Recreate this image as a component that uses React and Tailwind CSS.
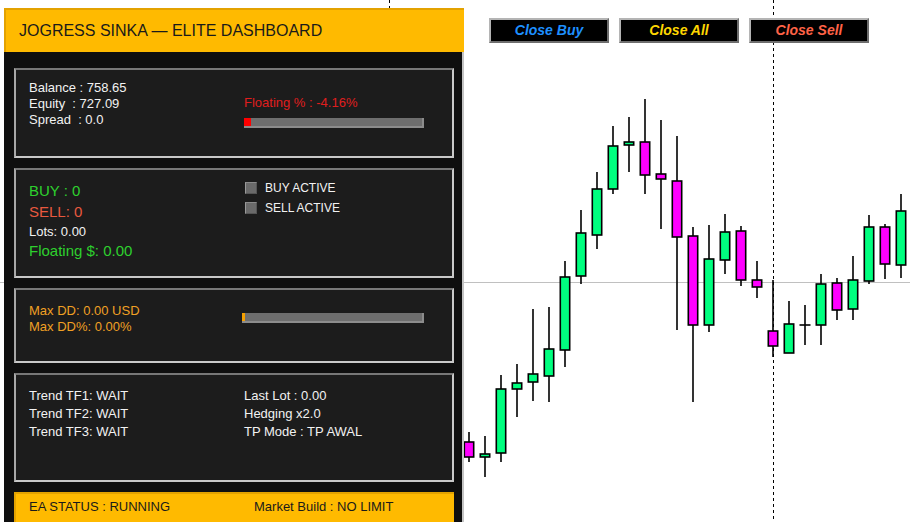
import React from "react";

const G = "#00ff7f";
const M = "#ff00ff";
const candles = [
  [469, 432, 462, 442, 457, M],
  [485, 436, 477, 454, 457, G],
  [501, 375, 462, 389, 453, G],
  [517, 364, 417, 383, 389, G],
  [533, 309, 401, 374, 382, G],
  [549, 307, 402, 349, 376, G],
  [565, 261, 367, 277, 350, G],
  [581, 210, 284, 233, 276, G],
  [597, 172, 249, 189, 235, G],
  [613, 126, 194, 146, 189, G],
  [629, 117, 172, 142, 145, G],
  [645, 99, 194, 142, 175, M],
  [661, 120, 229, 174, 179, M],
  [677, 136, 330, 181, 237, M],
  [693, 227, 402, 236, 325, M],
  [709, 225, 332, 259, 325, G],
  [725, 214, 274, 232, 260, G],
  [741, 226, 286, 231, 280, M],
  [757, 261, 298, 280, 287, M],
  [773, 280, 357, 331, 346, M],
  [789, 301, 353, 324, 353, G],
  [805, 305, 345, 325, 325, G],
  [821, 274, 345, 284, 325, G],
  [837, 278, 320, 283, 310, M],
  [853, 256, 320, 280, 309, G],
  [869, 215, 284, 227, 281, G],
  [885, 224, 279, 227, 264, M],
  [901, 194, 278, 211, 265, G],
];

function Chart() {
  return (
    <svg
      className="absolute left-0 top-0"
      width="910"
      height="522"
      viewBox="0 0 910 522"
    >
      <rect x="0" y="0" width="910" height="522" fill="#ffffff" />
      <line x1="0" y1="282.5" x2="910" y2="282.5" stroke="#c0c0c0" strokeWidth="1" />
      <line x1="389.5" y1="0" x2="389.5" y2="522" stroke="#000" strokeWidth="1" strokeDasharray="3 3" />
      <line x1="773.5" y1="0" x2="773.5" y2="522" stroke="#000" strokeWidth="1" strokeDasharray="3 3" />
      {candles.map(([x, hi, lo, top, bot, c], i) => (
        <g key={i}>
          <line x1={x} y1={hi} x2={x} y2={lo} stroke="#000" strokeWidth="1.6" />
          {bot - top < 1 ? (
            <line x1={x - 5.5} y1={top} x2={x + 5.5} y2={top} stroke="#000" strokeWidth="1.6" />
          ) : (
            <rect
              x={x - 4.7}
              y={top}
              width="9.4"
              height={bot - top}
              fill={c}
              stroke="#000"
              strokeWidth="1.6"
            />
          )}
        </g>
      ))}
    </svg>
  );
}

function Panel({ h, children }) {
  return (
    <div
      className="w-[440px] bg-[#1c1c1c] border-2 border-t-[#777777] border-l-[#a8a8a8] border-r-[#c8c8c8] border-b-[#c8c8c8] flex"
      style={{ height: h }}
    >
      {children}
    </div>
  );
}

function Btn({ children, color }) {
  return (
    <div
      className={`w-[120px] h-[25px] bg-black border-2 border-t-[#b4b4b4] border-l-[#b4b4b4] border-r-[#6e6e6e] border-b-[#6e6e6e] flex items-center justify-center text-[14px] font-bold italic ${color}`}
    >
      {children}
    </div>
  );
}

function Check({ label }) {
  return (
    <div className="flex items-center h-[20px]">
      <div className="w-[12px] h-[12px] bg-[#6a6a6a] border border-t-[#8a8a8a] border-l-[#9a9a9a] border-r-[#555555] border-b-[#555555] ml-[1px]" />
      <span className="ml-[8px] text-[12px] text-[#f2f2f2]">{label}</span>
    </div>
  );
}

export default function App() {
  return (
    <div
      className="relative w-[910px] h-[522px] overflow-hidden bg-white"
      style={{ fontFamily: '"Liberation Sans", Arial, sans-serif' }}
    >
      <Chart />

      <div className="absolute left-[489px] top-[18px] flex gap-[10px]">
        <Btn color="text-[#1e90ff]">Close Buy</Btn>
        <Btn color="text-[#ffd700]">Close All</Btn>
        <Btn color="text-[#ff6347]">Close Sell</Btn>
      </div>

      <div className="absolute left-[4px] top-[8px] w-[460px] h-[540px] flex flex-col">
        <div className="h-[44px] bg-[#ffba00] border-t-2 border-l-2 border-[#e3a200] flex items-center pl-[13px] text-[16px] text-[#1a1a1a]">
          JOGRESS SINKA — ELITE DASHBOARD
        </div>
        <div className="flex-1 bg-[#0f0f0f] border-r-2 border-[#c4c4c4] pl-[10px] pt-[16px] flex flex-col gap-[10px]">
          <Panel h={90}>
            <div className="w-[228px] pl-[13px] pt-[10px] text-[13px] leading-[16px] text-[#f2f2f2]">
              <div>Balance : 758.65</div>
              <div>Equity&nbsp; : 727.09</div>
              <div>Spread&nbsp; : 0.0</div>
            </div>
            <div className="pt-[25px]">
              <div className="text-[13px] leading-[16px] text-[#e01e1e]">Floating % : -4.16%</div>
              <div className="mt-[7px] w-[180px] h-[10px] bg-[#6e6e6e] border-r-2 border-b-2 border-[#8c8c8c] flex">
                <div className="w-[7px] h-full bg-[#ff0000]" />
              </div>
            </div>
          </Panel>

          <Panel h={110}>
            <div className="w-[228px] pl-[13px] pt-[11px]">
              <div className="text-[15px] leading-[20px] text-[#2ed02e]">BUY : 0</div>
              <div className="text-[15px] leading-[22px] text-[#e8593f]">SELL: 0</div>
              <div className="text-[13px] leading-[18px] text-[#f2f2f2]">Lots: 0.00</div>
              <div className="text-[15px] leading-[20px] text-[#2ed02e]">Floating $: 0.00</div>
            </div>
            <div className="pt-[8px]">
              <Check label="BUY ACTIVE" />
              <Check label="SELL ACTIVE" />
            </div>
          </Panel>

          <Panel h={75}>
            <div className="w-[226px] pl-[13px] pt-[13px] text-[13px] leading-[16px] text-[#f0a024]">
              <div>Max DD: 0.00 USD</div>
              <div>Max DD%: 0.00%</div>
            </div>
            <div className="pt-[23px]">
              <div className="w-[182px] h-[10px] bg-[#6e6e6e] border-r-2 border-b-2 border-[#8c8c8c] flex">
                <div className="w-[3px] h-full bg-[#f5a000]" />
              </div>
            </div>
          </Panel>

          <Panel h={109}>
            <div className="w-[228px] pl-[13px] pt-[12px] text-[13px] leading-[18px] text-[#f2f2f2]">
              <div>Trend TF1: WAIT</div>
              <div>Trend TF2: WAIT</div>
              <div>Trend TF3: WAIT</div>
            </div>
            <div className="pt-[12px] text-[13px] leading-[18px] text-[#f2f2f2]">
              <div>Last Lot : 0.00</div>
              <div>Hedging x2.0</div>
              <div>TP Mode : TP AWAL</div>
            </div>
          </Panel>

          <div className="w-[440px] h-[32px] bg-[#ffba00] border-t-2 border-l-2 border-[#e3a200] flex items-start pl-[13px] text-[13px] leading-[26px] text-[#1a1a1a]">
            <div className="w-[225px]">EA STATUS : RUNNING</div>
            <div>Market Build : NO LIMIT</div>
          </div>
        </div>
      </div>
    </div>
  );
}
